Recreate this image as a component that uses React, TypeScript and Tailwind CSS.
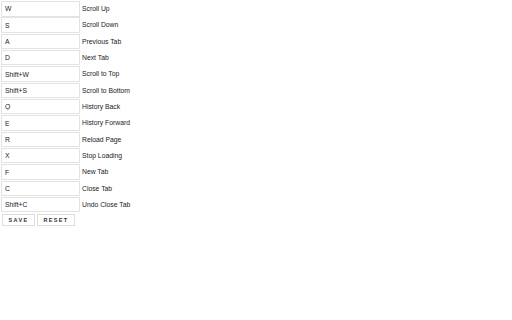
const bindings = [
  { key: 'W', label: 'Scroll Up' },
  { key: 'S', label: 'Scroll Down' },
  { key: 'A', label: 'Previous Tab' },
  { key: 'D', label: 'Next Tab' },
  { key: 'Shift+W', label: 'Scroll to Top' },
  { key: 'Shift+S', label: 'Scroll to Bottom' },
  { key: 'Q', label: 'History Back' },
  { key: 'E', label: 'History Forward' },
  { key: 'R', label: 'Reload Page' },
  { key: 'X', label: 'Stop Loading' },
  { key: 'F', label: 'New Tab' },
  { key: 'C', label: 'Close Tab' },
  { key: 'Shift+C', label: 'Undo Close Tab' },
];

export default function App() {
  return (
    <div className="min-h-screen w-full bg-white font-['Liberation_Sans',Arial,sans-serif] text-[6.8px] text-[#222]">
      <div className="pl-[1px] pt-[1px]">
        {bindings.map((b) => (
          <div key={b.key} className="flex h-[16.33px] items-start">
            <input
              readOnly
              value={b.key}
              className="h-[15.5px] w-[79px] border border-[#e3e3e3] bg-white px-[3px] text-[6.8px] text-[#222] outline-none"
            />
            <span className="ml-[2px] mt-[4px] leading-[7px]">{b.label}</span>
          </div>
        ))}
        <div className="mt-[0.5px] flex gap-[2px] pl-[1px]">
          <button className="h-[12px] w-[33px] border border-[#ddd] bg-white text-[5.5px] font-bold tracking-[1.3px] text-[#333]">
            SAVE
          </button>
          <button className="h-[12px] w-[38px] border border-[#ddd] bg-white text-[5.5px] font-bold tracking-[1.3px] text-[#333]">
            RESET
          </button>
        </div>
      </div>
    </div>
  );
}
